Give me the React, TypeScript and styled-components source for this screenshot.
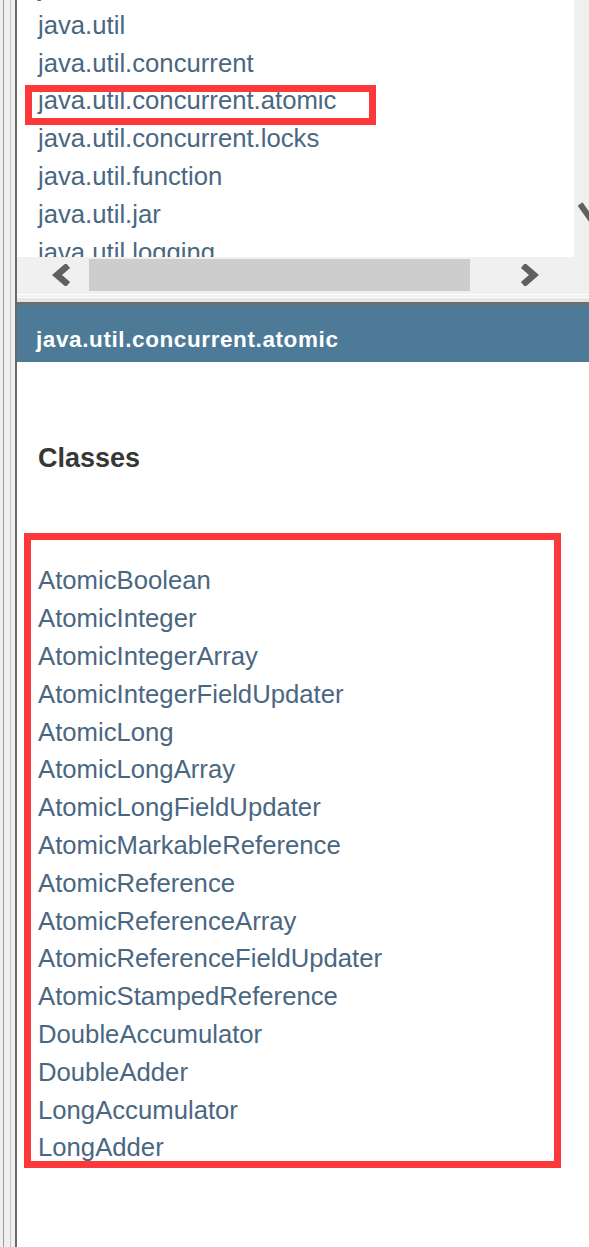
import { FC } from 'react'
import styled, { createGlobalStyle } from 'styled-components'

const GlobalStyle = createGlobalStyle`
  html, body {
    margin: 0;
    padding: 0;
    background: #fff;
    font-family: "Liberation Sans", Arial, sans-serif;
  }
`

const Frame = styled.div`
  display: flex;
  min-height: 100vh;
  width: 589px;
  overflow: hidden;
`

// the window splitter on the far left
const Splitter = styled.div`
  flex: 0 0 17px;
  background: linear-gradient(
    to right,
    #f0f0f0 0 3px,
    #9c9c9c 3px 4px,
    #f0f0f0 4px 10px,
    #c6c6c6 10px 11px,
    #f0f0f0 11px 15px,
    #6a6a6a 15px 17px
  );
`

const Main = styled.div`
  flex: 1;
  display: flex;
  flex-direction: column;
  min-width: 0;
`

const TopPane = styled.div`
  display: flex;
  height: 257px;
`

const ListViewport = styled.div`
  flex: 1;
  background: #fff;
  overflow: hidden;
`

const PackageList = styled.ul`
  list-style: none;
  margin: -31px 0 0;
  padding: 0 0 0 21px;
`

const Item = styled.li`
  position: relative;
  font-size: 25.7px;
  line-height: 37.8px;
  color: #4a6782;
  white-space: nowrap;
`

const Highlight = styled.span`
  position: absolute;
  top: 3px;
  left: -13px;
  width: 351px;
  height: 40px;
  box-sizing: border-box;
  border: 7px solid #fd383a;
  pointer-events: none;
`

const VScroll = styled.div`
  flex: 0 0 15px;
  position: relative;
  overflow: hidden;
  background: #f0f0f0;
`

const VArrow = styled.svg`
  position: absolute;
  top: 201px;
  left: 4px;
`

const HScroll = styled.div`
  display: flex;
  align-items: center;
  height: 36px;
  padding-left: 35px;
  background: #f0f0f0;
`

const Thumb = styled.div`
  width: 381px;
  height: 32px;
  margin: 0 49px 0 17px;
  background: #cdcdcd;
`

const Divider = styled.div`
  height: 12px;
  background: linear-gradient(
    to bottom,
    #f0f0f0 0 1px,
    #fff 1px 2px,
    #f0f0f0 2px 4px,
    #fff 4px 5px,
    #e6e6e6 5px 9px,
    #6e6e6e 9px 12px
  );
`

const Header = styled.div`
  height: 57px;
  box-sizing: border-box;
  padding: 12px 0 0 19px;
  background: #4d7a97;
  color: #fff;
  font-weight: bold;
  font-size: 22.5px;
  line-height: 45px;
  letter-spacing: 0.6px;
  white-space: nowrap;
`

const Content = styled.div`
  padding: 79px 0 0 7px;
`

const SectionTitle = styled.h2`
  margin: 0 0 58px 14px;
  font-size: 27px;
  line-height: 34px;
  font-weight: bold;
  color: #353833;
`

const ClassBox = styled.div`
  width: 537px;
  height: 635px;
  box-sizing: border-box;
  border: 7px solid #fd383a;
  padding: 22.4px 0 0 7px;
`

const ClassList = styled.ul`
  list-style: none;
  margin: 0;
  padding: 0;
`

const packages = [
  'java.time.zone',
  'java.util',
  'java.util.concurrent',
  'java.util.concurrent.atomic',
  'java.util.concurrent.locks',
  'java.util.function',
  'java.util.jar',
  'java.util.logging',
  'java.util.prefs',
]

const classes = [
  'AtomicBoolean',
  'AtomicInteger',
  'AtomicIntegerArray',
  'AtomicIntegerFieldUpdater',
  'AtomicLong',
  'AtomicLongArray',
  'AtomicLongFieldUpdater',
  'AtomicMarkableReference',
  'AtomicReference',
  'AtomicReferenceArray',
  'AtomicReferenceFieldUpdater',
  'AtomicStampedReference',
  'DoubleAccumulator',
  'DoubleAdder',
  'LongAccumulator',
  'LongAdder',
]

const Chevron: FC<{ dir: 'left' | 'right' }> = ({ dir }) => (
  <svg width="20" height="22" viewBox="0 0 20 22">
    <polyline
      points={dir === 'left' ? '16,1.5 5,11 16,20.5' : '4,1.5 15,11 4,20.5'}
      fill="none"
      stroke="#606060"
      strokeWidth="6.5"
    />
  </svg>
)

const App: FC = () => (
  <>
    <GlobalStyle />
    <Frame>
      <Splitter />
      <Main>
        <TopPane>
          <ListViewport>
            <PackageList>
              {packages.map((p) => (
                <Item key={p}>
                  {p}
                  {p === 'java.util.concurrent.atomic' && <Highlight />}
                </Item>
              ))}
            </PackageList>
          </ListViewport>
          <VScroll>
            <VArrow width="24" height="22" viewBox="0 0 24 22">
              <polyline
                points="2,3 12,17 22,3"
                fill="none"
                stroke="#606060"
                strokeWidth="6"
              />
            </VArrow>
          </VScroll>
        </TopPane>
        <HScroll>
          <Chevron dir="left" />
          <Thumb />
          <Chevron dir="right" />
        </HScroll>
        <Divider />
        <Header>java.util.concurrent.atomic</Header>
        <Content>
          <SectionTitle>Classes</SectionTitle>
          <ClassBox>
            <ClassList>
              {classes.map((c) => (
                <Item key={c}>{c}</Item>
              ))}
            </ClassList>
          </ClassBox>
        </Content>
      </Main>
    </Frame>
  </>
)

export default App
